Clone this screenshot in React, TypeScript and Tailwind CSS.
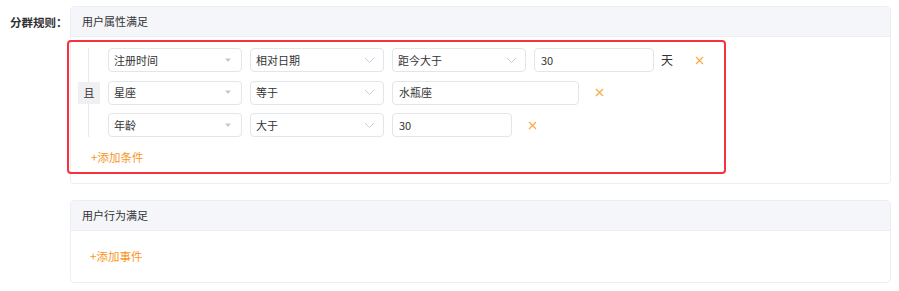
import React from "react";

const font = { fontFamily: '"Noto Sans CJK SC", "Noto Sans", sans-serif' };

function Caret() {
  return (
    <svg width="8" height="5" viewBox="0 0 8 5" className="shrink-0">
      <path d="M1 0.5 L7 0.5 L4 4 Z" fill="#c4c8ce" />
    </svg>
  );
}

function Chevron() {
  return (
    <svg width="11" height="7" viewBox="0 0 11 7" className="shrink-0">
      <path d="M1 1 L5.5 5.5 L10 1" fill="none" stroke="#c8ccd4" strokeWidth="1" />
    </svg>
  );
}

function Select({ text, kind }: { text: string; kind: "caret" | "chevron" }) {
  return (
    <div
      className={`flex h-[24px] w-[134px] shrink-0 items-center justify-between rounded-[4px] border border-[#e2e5ea] bg-white pl-[5px] ${
        kind === "caret" ? "pr-[9px]" : "pr-[8px]"
      } text-[11px] text-[#333]`}
    >
      <span>{text}</span>
      {kind === "caret" ? <Caret /> : <Chevron />}
    </div>
  );
}

function Input({ text, w }: { text: string; w: string }) {
  return (
    <div
      className={`flex h-[24px] ${w} shrink-0 items-center rounded-[4px] border border-[#e2e5ea] bg-white pl-[6px] text-[11px] text-[#333]`}
    >
      {text}
    </div>
  );
}

function XIcon() {
  return (
    <svg width="9" height="9" viewBox="0 0 9 9" className="shrink-0">
      <path d="M1 1 L8 8 M8 1 L1 8" stroke="#f9a84a" strokeWidth="1.2" />
    </svg>
  );
}

export default function App() {
  return (
    <div className="flex bg-white pt-[6px] text-[#333]" style={font}>
      <div className="w-[70px] shrink-0 pl-[10px] pt-[8px] text-[11.5px] font-bold leading-[17px] text-[#333]">
        分群规则：
      </div>
      <div className="flex w-[821px] flex-col gap-[16px]">
        {/* Card 1 */}
        <div className="rounded-[4px] border border-[#eceef2]">
          <div className="flex h-[30px] items-center border-b border-[#eceef2] bg-[#f5f6fa] pl-[11px] text-[11px] text-[#333]">
            用户属性满足
          </div>
          <div className="pb-[9px] pt-[3px]">
            <div className="ml-[-4px] flex h-[134px] w-[659px] flex-col rounded-[4px] border-2 border-[#f5333f] pb-[6px] pl-[9px] pt-[6px]">
              <div className="flex">
                <div className="relative flex w-[22px] shrink-0 items-center justify-center">
                  <div className="absolute bottom-0 left-[10px] top-0 w-px bg-[#e8eaee]" />
                  <div className="relative flex h-[22px] w-[22px] items-center justify-center bg-[#f0f0f2] text-[11px] text-[#333]">
                    且
                  </div>
                </div>
                <div className="ml-[8px] flex flex-col gap-[8.5px]">
                  <div className="flex items-center">
                    <Select text="注册时间" kind="caret" />
                    <div className="ml-[8px]"><Select text="相对日期" kind="chevron" /></div>
                    <div className="ml-[8px]"><Select text="距今大于" kind="chevron" /></div>
                    <div className="ml-[8px]"><Input text="30" w="w-[120px]" /></div>
                    <span className="ml-[7px] text-[12px] text-[#333]">天</span>
                    <div className="ml-[22px]"><XIcon /></div>
                  </div>
                  <div className="flex items-center">
                    <Select text="星座" kind="caret" />
                    <div className="ml-[8px]"><Select text="等于" kind="chevron" /></div>
                    <div className="ml-[8px]"><Input text="水瓶座" w="w-[187px]" /></div>
                    <div className="ml-[16px]"><XIcon /></div>
                  </div>
                  <div className="flex items-center">
                    <Select text="年龄" kind="caret" />
                    <div className="ml-[8px]"><Select text="大于" kind="chevron" /></div>
                    <div className="ml-[8px]"><Input text="30" w="w-[120px]" /></div>
                    <div className="ml-[16px]"><XIcon /></div>
                  </div>
                </div>
              </div>
              <div className="ml-[13px] mt-[12px] text-[11.5px] leading-[17px] text-[#fa9424]">+添加条件</div>
            </div>
          </div>
        </div>
        {/* Card 2 */}
        <div className="rounded-[4px] border border-[#eceef2]">
          <div className="flex h-[30px] items-center border-b border-[#eceef2] bg-[#f5f6fa] pl-[11px] text-[11px] text-[#333]">
            用户行为满足
          </div>
          <div className="flex h-[51px] items-center pl-[19px] text-[11.5px] text-[#fa9424]">+添加事件</div>
        </div>
      </div>
    </div>
  );
}
